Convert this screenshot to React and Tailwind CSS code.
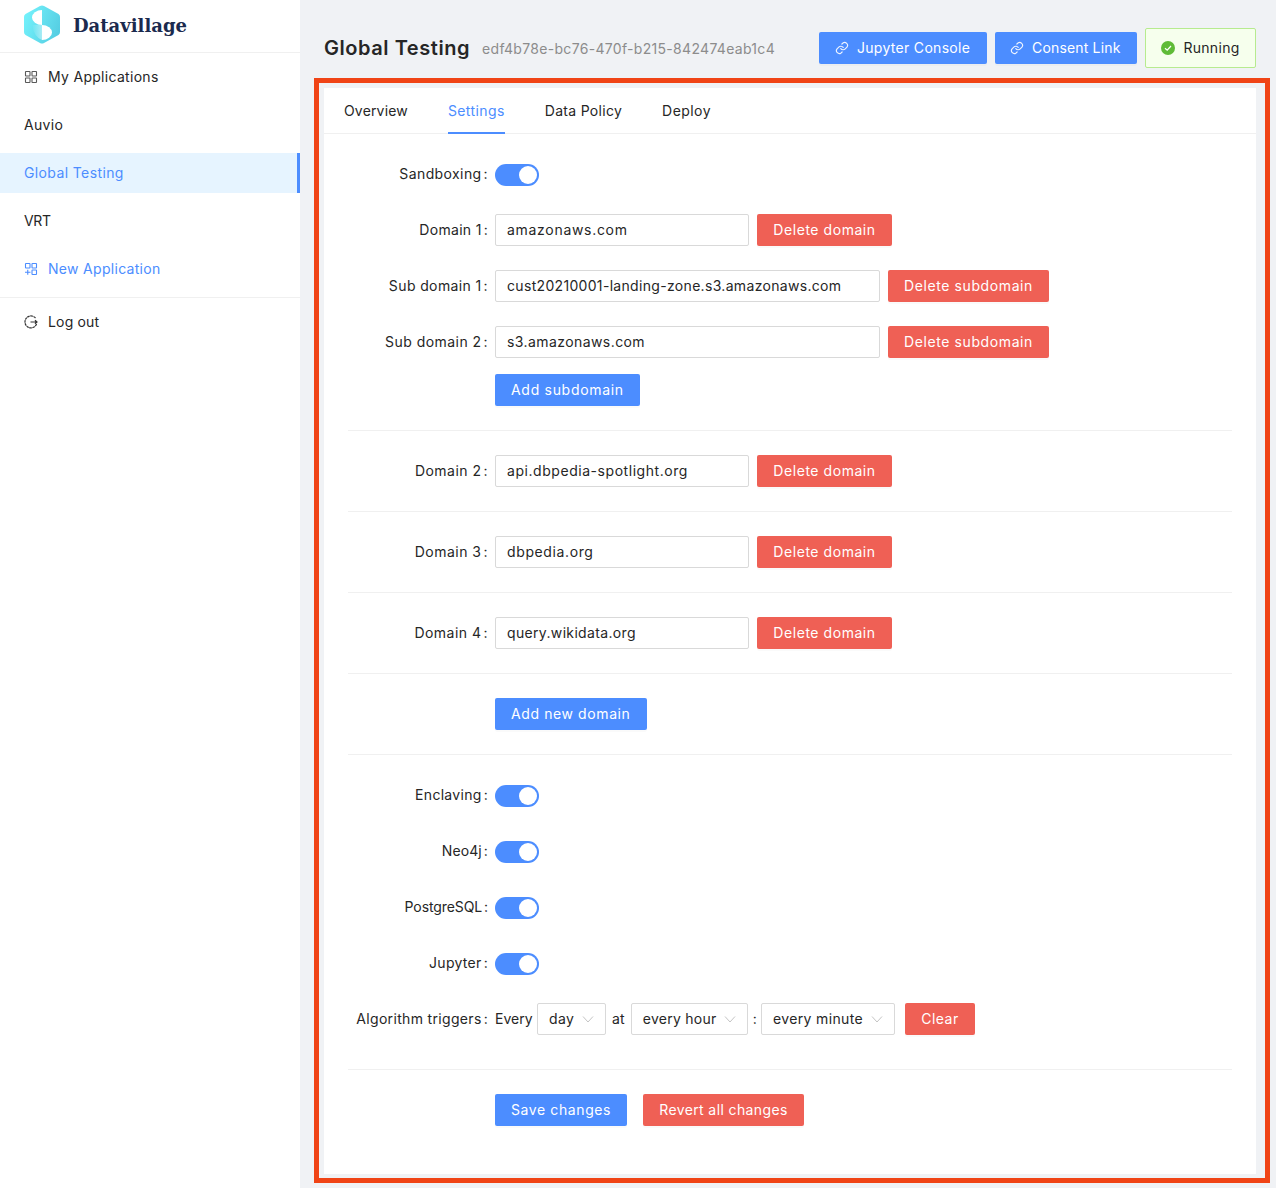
import React from "react";

const Del = ({ children, className = "px-4" }) => (
  <button className={"h-8 pb-[2px] rounded-[2px] bg-[#ef6055] text-white text-[14px] shadow-[0_2px_0_rgba(0,0,0,0.02)] whitespace-nowrap " + className}>{children}</button>
);
const Pri = ({ children, className = "px-4" }) => (
  <button className={"h-8 pb-[2px] rounded-[2px] bg-[#4c8dff] text-white text-[14px] shadow-[0_2px_0_rgba(0,0,0,0.02)] whitespace-nowrap flex items-center " + className}>{children}</button>
);
const DelDomain = () => <Del className="w-[135px] tracking-[0.55px]">Delete domain</Del>;
const DelSub = () => <Del className="w-[161px] tracking-[0.6px]">Delete subdomain</Del>;
const Row = ({ label, children, className = "mb-6", lt = "tracking-[0.3px]" }) => (
  <div className={"flex h-8 " + className}>
    <div className={"w-[147px] shrink-0 flex items-center justify-end pr-[7px] pb-[2px] text-[14px] text-[#262626] whitespace-nowrap " + lt}>
      {label ? <span>{label}<span className="ml-[2px]">:</span></span> : null}
    </div>
    <div className="flex items-start gap-2 flex-1">{children}</div>
  </div>
);
const Input = ({ value, w }) => (
  <div className={"h-8 pb-[2px] border border-[#d9d9d9] rounded-[2px] bg-white pl-[11px] flex items-center text-[14px] text-[#262626] whitespace-nowrap " + w}>{value}</div>
);
const Toggle = () => (
  <div className="mt-[6px] w-[44px] h-[22px] rounded-full bg-[#4c8dff] relative">
    <div className="absolute top-[2px] right-[2px] w-[18px] h-[18px] rounded-full bg-white" />
  </div>
);
const Hr = () => <div className="h-px bg-[#f0f0f0] mb-6" />;
const Chevron = () => (
  <svg width="12" height="12" viewBox="0 0 12 12" fill="none" stroke="#c4c4c4" strokeWidth="1" className="shrink-0 mt-[2px]"><path d="M1 3.5 L6 9 L11 3.5" /></svg>
);
const Select = ({ value, w }) => (
  <div className={"h-8 pb-[2px] border border-[#d9d9d9] rounded-[2px] bg-white px-[11px] flex items-center justify-between text-[14px] text-[#262626] whitespace-nowrap " + w}>
    <span>{value}</span><Chevron />
  </div>
);
const LinkIcon = () => (
  <svg width="14" height="14" viewBox="0 0 24 24" fill="none" stroke="currentColor" strokeWidth="2" strokeLinecap="round" strokeLinejoin="round" className="mr-[8px] mt-[2px] opacity-90">
    <path d="M10 13a5 5 0 0 0 7.5.5l3-3a5 5 0 0 0-7-7l-1.7 1.7" />
    <path d="M14 11a5 5 0 0 0-7.5-.5l-3 3a5 5 0 0 0 7 7l1.7-1.7" />
  </svg>
);
const GridIcon = ({ plus }) => (
  <svg width="14" height="14" viewBox="0 0 14 14" fill="none" stroke="currentColor" strokeWidth="1.1">
    <rect x="1.5" y="1.5" width="4.5" height="4.5" rx="0.5" />
    <rect x="8" y="1.5" width="4.5" height="4.5" rx="0.5" />
    <rect x="8" y="8" width="4.5" height="4.5" rx="0.5" />
    {plus ? <path d="M3.75 7.8 V12.8 M1 10.3 H6.5" /> : <rect x="1.5" y="8" width="4.5" height="4.5" rx="0.5" />}
  </svg>
);
const Logo = () => (
  <svg width="36" height="39" viewBox="0 0 36 39" className="shrink-0 -mt-[3px]">
    <defs>
      <linearGradient id="hexg" x1="0" y1="0.3" x2="1" y2="0.7">
        <stop offset="0" stopColor="#73f1fb" />
        <stop offset="1" stopColor="#55cde2" />
      </linearGradient>
      <linearGradient id="fadeg" x1="0" y1="0" x2="1" y2="0">
        <stop offset="0" stopColor="#ffffff" stopOpacity="0" />
        <stop offset="1" stopColor="#ffffff" stopOpacity="0.45" />
      </linearGradient>
    </defs>
    <path d="M16 1 Q18 0 20 1 L34.5 9 Q36 10 36 12 V27 Q36 29 34.5 30 L20 38 Q18 39 16 38 L1.5 30 Q0 29 0 27 V12 Q0 10 1.5 9 Z" fill="url(#hexg)" />
    <path d="M18 5 A10 7.5 0 0 0 18 20 Z" fill="#ffffff" />
    <path d="M18 20 A10 7.5 0 0 1 18 35 Z" fill="#ffffff" />
    <path d="M8 20 H18 V35 Q10 32 8 20 Z" fill="url(#fadeg)" />
  </svg>
);

const Side = ({ children, active, blue, icon, className = "" }) => (
  <div className={"h-10 pl-6 pb-[2px] flex items-center text-[14px] relative " + (active ? "bg-[#e6f4ff] text-[#4c8dff] " : blue ? "text-[#4c8dff] " : "text-[#262626] ") + className}>
    {icon ? <span className={"w-6 flex items-center mt-[2px] " + (blue ? "" : "text-[#595959]")}>{icon}</span> : null}
    <span>{children}</span>
    {active ? <div className="absolute right-0 top-0 bottom-0 w-[3px] bg-[#4c8dff]" /> : null}
  </div>
);

export default function App() {
  return (
    <div className="flex h-[1188px] overflow-hidden bg-[#f0f2f5] tracking-[0.168px]" style={{ fontFamily: '"Inter", "Noto Sans", sans-serif' }}>
      <aside className="w-[300px] shrink-0 bg-white">
        <div className="h-[53px] border-b border-[#f0f0f0] pl-6 flex items-center gap-[13px]">
          <Logo />
          <span className="text-[18px] font-bold text-[#1b2a4e] tracking-normal -mt-[2px]" style={{ fontFamily: '"DejaVu Serif", serif' }}>Datavillage</span>
        </div>
        <div className="flex flex-col gap-2 pt-1 pb-2 border-b border-[#f0f0f0]">
          <Side icon={<GridIcon />} className="tracking-[0.3px]">My Applications</Side>
          <Side className="tracking-[0.3px]">Auvio</Side>
          <Side active className="tracking-[0.38px]">Global Testing</Side>
          <Side className="tracking-[-0.3px]">VRT</Side>
          <Side blue icon={<GridIcon plus />} className="tracking-[0.3px]">New Application</Side>
        </div>
        <div className="pl-6 pb-[2px] h-[48px] flex items-center text-[14px] text-[#262626]">
          <svg width="14" height="14" viewBox="0 0 14 14" fill="none" stroke="#333" strokeWidth="1.2" className="mr-[10px] mt-[2px]">
            <path d="M11.5 3 A6 6 0 1 0 12.6 9" strokeDasharray="2.6 0.5" />
            <path d="M6.5 7 H13 M11 5.2 L13 7 L11 8.8" />
          </svg>
          Log out
        </div>
      </aside>
      <main className="flex-1 min-w-0 pl-6 pr-5 pt-7 pb-[14px] flex flex-col">
        <header className="h-10 flex items-center shrink-0 mb-5">
          <h1 className="text-[20px] font-semibold text-[#262626] whitespace-nowrap tracking-[0.55px]">Global Testing</h1>
          <span className="ml-3 text-[14px] text-[#8c8c8c] whitespace-nowrap tracking-[0.31px]">edf4b78e-bc76-470f-b215-842474eab1c4</span>
          <div className="ml-auto flex items-center gap-2">
            <Pri className="w-[168px] pl-[16px] tracking-[0.3px]"><LinkIcon />Jupyter Console</Pri>
            <Pri className="w-[142px] pl-[15px]"><LinkIcon />Consent Link</Pri>
            <div className="h-10 w-[111px] pb-[2px] border border-[#b7eb8f] bg-[#f6ffed] rounded-[2px] flex items-center justify-center text-[14px] text-[#262626] tracking-[0.3px]">
              <svg width="14" height="14" viewBox="0 0 14 14" className="mr-2 mt-[2px]">
                <circle cx="7" cy="7" r="7" fill="#5fbb37" />
                <path d="M4 7.2 L6.2 9.2 L10 5" fill="none" stroke="#fff" strokeWidth="1.2" />
              </svg>
              Running
            </div>
          </div>
        </header>
        <section className="relative bg-white flex-1 min-h-0">
          <div className="absolute -left-[10px] -top-[10px] -right-[14px] -bottom-[9px] border-[5px] border-[#f04416] pointer-events-none" />
          <nav className="h-[46px] border-b border-[#f0f0f0] pl-5 flex gap-10 text-[14px] text-[#262626]">
            <div className="h-[46px] pb-[2px] flex items-center">Overview</div>
            <div className="h-[46px] flex items-center text-[#4c8dff] border-b-2 border-[#4c8dff] tracking-[0.4px]">Settings</div>
            <div className="h-[46px] pb-[2px] flex items-center tracking-[0.3px]">Data Policy</div>
            <div className="h-[46px] pb-[2px] flex items-center tracking-[0.45px]">Deploy</div>
          </nav>
          <div className="px-6 pt-6">
            <Row label="Sandboxing" lt="tracking-[0.4px]"><Toggle /></Row>
            <Row label="Domain 1"><Input value="amazonaws.com" w="w-[254px] tracking-[0.7px]" /><DelDomain /></Row>
            <Row label="Sub domain 1" lt="tracking-[0.38px]"><Input value="cust20210001-landing-zone.s3.amazonaws.com" w="w-[385px] tracking-[0.32px]" /><DelSub /></Row>
            <Row label="Sub domain 2" className="mb-4" lt="tracking-[0.45px]"><Input value="s3.amazonaws.com" w="w-[385px] tracking-[0.42px]" /><DelSub /></Row>
            <Row><Pri className="w-[145px] pl-4 tracking-[0.7px]">Add subdomain</Pri></Row>
            <Hr />
            <Row label="Domain 2" lt="tracking-[0.48px]"><Input value="api.dbpedia-spotlight.org" w="w-[254px] tracking-[0.55px]" /><DelDomain /></Row>
            <Hr />
            <Row label="Domain 3" lt="tracking-[0.48px]"><Input value="dbpedia.org" w="w-[254px] tracking-[0.62px]" /><DelDomain /></Row>
            <Hr />
            <Row label="Domain 4" lt="tracking-[0.48px]"><Input value="query.wikidata.org" w="w-[254px] tracking-[0.34px]" /><DelDomain /></Row>
            <Hr />
            <Row><Pri className="w-[152px] pl-4 tracking-[0.6px]">Add new domain</Pri></Row>
            <Hr />
            <Row label="Enclaving"><Toggle /></Row>
            <Row label="Neo4j" lt="tracking-[0.1px]"><Toggle /></Row>
            <Row label="PostgreSQL" lt="tracking-[-0.1px]"><Toggle /></Row>
            <Row label="Jupyter"><Toggle /></Row>
            <Row label="Algorithm triggers" className="mb-[34px]" lt="tracking-[0.33px]">
              <div className="flex items-center text-[14px] text-[#262626] whitespace-nowrap">
                <span className="w-[37px] pb-[2px] tracking-[0px]">Every</span>
                <Select value="day" w="w-[69px] ml-[5px] tracking-[0.4px]" />
                <span className="ml-[6px] pb-[2px]">at</span>
                <Select value="every hour" w="w-[117px] ml-[6px] tracking-[0.25px]" />
                <span className="ml-[5px] pb-[2px]">:</span>
                <Select value="every minute" w="w-[134px] ml-[4px] tracking-[0.36px]" />
                <Del className="w-[70px] ml-[10px] tracking-[0.5px]">Clear</Del>
              </div>
            </Row>
            <Hr />
            <Row>
              <Pri className="w-[132px] pl-4 tracking-[0.6px]">Save changes</Pri>
              <Del className="w-[161px] ml-2 tracking-[0.39px]">Revert all changes</Del>
            </Row>
          </div>
        </section>
      </main>
    </div>
  );
}
